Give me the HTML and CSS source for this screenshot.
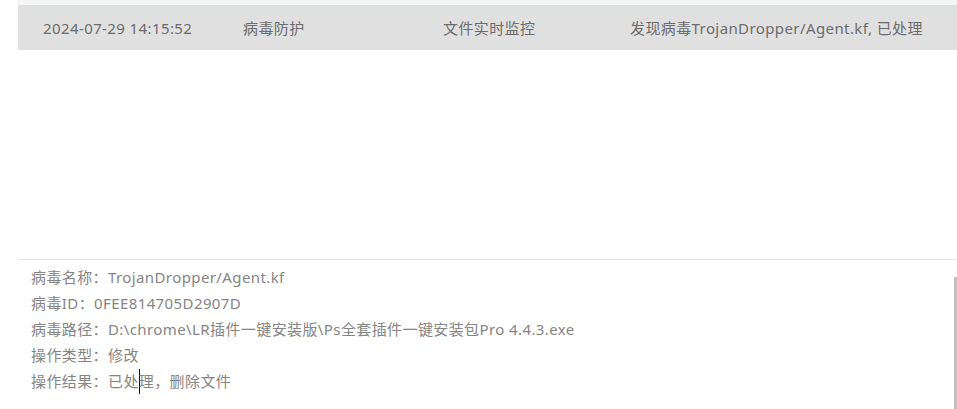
FILE: index.html
```html
<!DOCTYPE html>
<html lang="zh">
<head>
<meta charset="utf-8">
<link rel="stylesheet" href="styles.css">
</head>
<body>
<div class="page">
  <div class="list">
    <div class="strip"></div>
    <div class="row">
      <div class="cell c1">2024-07-29 14:15:52</div>
      <div class="cell c2">病毒防护</div>
      <div class="cell c3">文件实时监控</div>
      <div class="cell c4">发现病毒TrojanDropper/Agent.kf, 已处理</div>
    </div>
  </div>
  <div class="details">
    <div class="line">病毒名称：TrojanDropper/Agent.kf</div>
    <div class="line">病毒ID：0FEE814705D2907D</div>
    <div class="line">病毒路径：D:\chrome\LR插件一键安装版\Ps全套插件一键安装包Pro 4.4.3.exe</div>
    <div class="line">操作类型：修改</div>
    <div class="line">操作结果：已处<span class="caret"></span>理，删除文件</div>
  </div>
  <div class="scrollbar"></div>
</div>
</body>
</html>
```
FILE: styles.css
```css
html, body {
  margin: 0;
  padding: 0;
  background: #ffffff;
}
body {
  font-family: "Noto Sans", "Noto Sans CJK SC", sans-serif;
  font-size: 15px;
  letter-spacing: 0.4px;
  width: 957px;
  height: 409px;
  overflow: hidden;
}
.page {
  position: relative;
  height: 409px;
}
.list {
  margin-left: 18px;
  height: 259px;
}
.strip {
  height: 5px;
  background: #f5f7f7;
}
.row {
  display: flex;
  align-items: center;
  height: 45px;
  background: #e0e0e0;
  color: #6c6c6c;
  padding-left: 25px;
}
.c1, .c2 { width: 200px; flex: none; }
.c3 { width: 187px; flex: none; }
.cell { white-space: nowrap; }
.details {
  margin-left: 18px;
  border-top: 1px solid #e6e6e6;
  padding: 4px 0 0 13px;
  color: #858585;
}
.line {
  line-height: 26px;
  height: 26px;
  white-space: nowrap;
}
.caret {
  display: inline-block;
  width: 1px;
  height: 25px;
  margin-right: -1px;
  background: #000;
  vertical-align: -7px;
}
.scrollbar {
  position: absolute;
  right: 0;
  top: 277px;
  bottom: 0;
  width: 3px;
  background: #c0c0c0;
}
```
